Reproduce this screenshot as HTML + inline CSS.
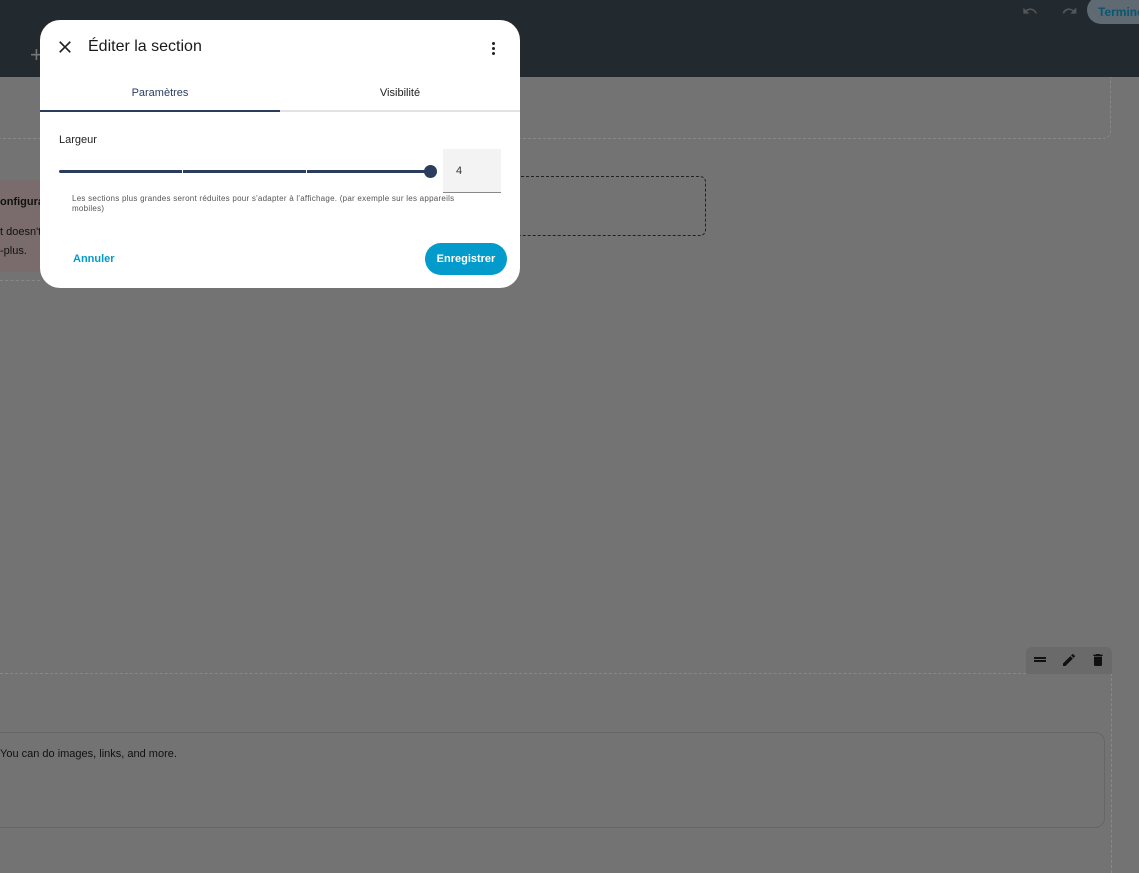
<!DOCTYPE html>
<html><head><meta charset="utf-8"><style>
*{box-sizing:border-box;margin:0;padding:0}
body{width:1139px;height:861px;overflow:hidden;background:#737373;font-family:"Liberation Sans",sans-serif;position:relative}
.abs{position:absolute}
</style></head><body>
<div class="abs" style="left:-10px;top:70px;width:1121px;height:69px;border:1px dashed #888;border-radius:8px"></div>
<div class="abs" style="left:0;top:0;width:1139px;height:77px;background:#22292f"></div>
<div class="abs" style="left:30px;top:42px;color:#777;font-size:22px">+</div>
<svg class="abs" style="left:1019px;top:3px" width="22" height="16" viewBox="0 0 24 24"><path d="M12.5 8c-2.6 0-5 1-6.9 2.6L2 7v9h9l-3.6-3.6c1.4-1.2 3.2-1.9 5.1-1.9 3.5 0 6.5 2.3 7.6 5.5l2.4-.8C21 11.5 17.1 8 12.5 8z" fill="#555"/></svg>
<svg class="abs" style="left:1058px;top:3px" width="22" height="16" viewBox="0 0 24 24"><path d="M18.4 10.6C16.5 9 14.1 8 11.5 8 6.9 8 3 11.5 2.4 15.2l2.4.8c1.1-3.2 4.1-5.5 7.6-5.5 1.9 0 3.7.7 5.1 1.9L14 16h9V7z" fill="#555"/></svg>
<div class="abs" style="left:1087px;top:-4px;width:80px;height:28px;border-radius:14px;background:#5f6a73;color:#0b5670;font-size:12px;font-weight:bold;padding:9px 0 0 11px">Terminer</div>
<div class="abs" style="left:0;top:180px;width:40px;height:92px;background:#7a6c6c"></div>
<div class="abs" style="left:0;top:196px;font-size:11px;font-weight:bold;color:#111">onfigura</div>
<div class="abs" style="left:0;top:226px;font-size:11px;color:#111">t doesn't</div>
<div class="abs" style="left:0;top:245px;font-size:11px;color:#111">-plus.</div>
<div class="abs" style="left:0;top:280px;width:40px;border-top:1px dashed #888"></div>
<div class="abs" style="left:480px;top:176px;width:226px;height:60px;border:1px dashed #222;border-radius:6px"></div>
<div class="abs" style="left:0;top:673px;width:1111px;border-top:1px dashed #888"></div>
<div class="abs" style="left:1111px;top:673px;height:200px;border-left:1px dashed #888"></div>
<div class="abs" style="left:1026px;top:647px;width:86px;height:27px;background:#6a6a6a;border-radius:6px 6px 0 0"></div>
<div class="abs" style="left:1034px;top:657px;width:12px;height:2px;background:#111;box-shadow:0 3px 0 #111"></div>
<svg class="abs" style="left:1061px;top:652px" width="16" height="16" viewBox="0 0 24 24"><path d="M3 17.25V21h3.75L17.8 9.94l-3.75-3.75zM20.7 7.04a1 1 0 000-1.41l-2.34-2.34a1 1 0 00-1.41 0l-1.83 1.83 3.75 3.75z" fill="#111"/></svg>
<svg class="abs" style="left:1090px;top:652px" width="16" height="16" viewBox="0 0 24 24"><path d="M6 19a2 2 0 002 2h8a2 2 0 002-2V7H6zM19 4h-3.5l-1-1h-5l-1 1H5v2h14z" fill="#111"/></svg>
<div class="abs" style="left:-10px;top:732px;width:1115px;height:96px;border:1px solid #666;border-radius:10px"></div>
<div class="abs" style="left:0;top:748px;font-size:11px;color:#111">You can do images, links, and more.</div>

<div class="abs" style="left:40px;top:20px;width:480px;height:268px;background:#fff;border-radius:20px;overflow:hidden">
 <svg class="abs" style="left:15px;top:17px" width="20" height="20" viewBox="0 0 24 24"><path d="M19 6.41L17.59 5 12 10.59 6.41 5 5 6.41 10.59 12 5 17.59 6.41 19 12 13.41 17.59 19 19 17.59 13.41 12z" fill="#222"/></svg>
 <div class="abs" style="left:48px;top:18px;font-size:16px;color:#1a1a1a">Éditer la section</div>
 <div class="abs" style="left:452px;top:22px;width:3px;height:3px;background:#222;border-radius:50%;box-shadow:0 5px 0 #222,0 10px 0 #222"></div>
 <div class="abs" style="left:0;top:67px;width:240px;text-align:center;font-size:11px;color:#2a3d5c">Paramètres</div>
 <div class="abs" style="left:240px;top:67px;width:240px;text-align:center;font-size:11px;color:#222">Visibilité</div>
 <div class="abs" style="left:0;top:90px;width:480px;height:2px;background:#e2e2e2"></div>
 <div class="abs" style="left:0;top:90px;width:240px;height:2px;background:#2a3d5c"></div>
 <div class="abs" style="left:19px;top:114px;font-size:11px;color:#222">Largeur</div>
 <div class="abs" style="left:19px;top:150px;width:372px;height:3px;background:#2a3d5c;border-radius:2px"></div>
 <div class="abs" style="left:142px;top:150px;width:1px;height:3px;background:#fff"></div>
 <div class="abs" style="left:266px;top:150px;width:1px;height:3px;background:#fff"></div>
 <div class="abs" style="left:384px;top:145px;width:13px;height:13px;background:#2a3d5c;border-radius:50%"></div>
 <div class="abs" style="left:403px;top:129px;width:58px;height:44px;background:#f3f3f3;border-bottom:1px solid #888;font-size:11px;color:#333;padding:16px 0 0 13px">4</div>
 <div class="abs" style="left:32px;top:174px;width:405px;font-size:8px;letter-spacing:0.25px;line-height:10px;color:#555">Les sections plus grandes seront réduites pour s'adapter à l'affichage. (par exemple sur les appareils mobiles)</div>
 <div class="abs" style="left:33px;top:233px;font-size:11px;font-weight:bold;color:#039bcc">Annuler</div>
 <div class="abs" style="left:385px;top:223px;width:82px;height:32px;border-radius:16px;background:#039bcc;color:#fff;font-size:11px;font-weight:bold;text-align:center;line-height:32px">Enregistrer</div>
</div>
</body></html>
